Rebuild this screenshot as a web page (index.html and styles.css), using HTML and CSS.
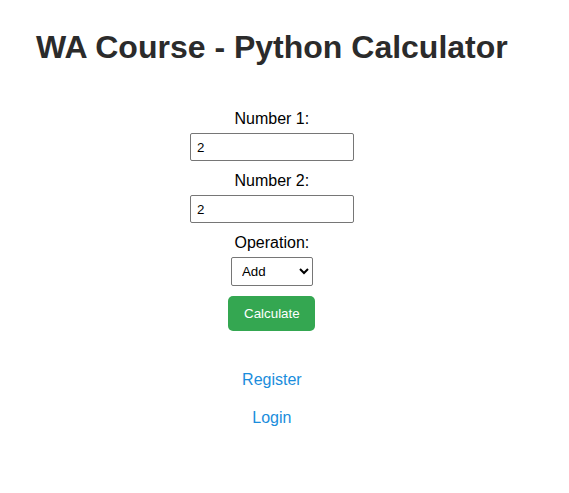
FILE: index.html
```html
<!DOCTYPE html>
<html lang="en">
<head>
<meta charset="utf-8">
<title>WA Course - Python Calculator</title>
<link rel="stylesheet" href="styles.css">
</head>
<body>
<div class="page">
  <h1 class="title">WA Course - Python Calculator</h1>
  <form class="calc">
    <label class="field-label" for="n1">Number 1:</label>
    <input class="num" id="n1" type="text" value="2">
    <label class="field-label" for="n2">Number 2:</label>
    <input class="num" id="n2" type="text" value="2">
    <label class="field-label" for="op">Operation:</label>
    <select class="op" id="op">
      <option>Add</option>
      <option>Subtract</option>
      <option>Multiply</option>
      <option>Divide</option>
    </select>
    <button class="btn" type="button">Calculate</button>
  </form>
  <nav class="links">
    <a class="link" href="#">Register</a>
    <a class="link" href="#">Login</a>
  </nav>
</div>
</body>
</html>
```

FILE: styles.css
```css
html, body {
  background: #ffffff;
}
body {
  margin: 8px;
  font-family: "Liberation Sans", Arial, sans-serif;
  color: #000;
}
.page {
  display: inline-flex;
  flex-direction: column;
  align-items: center;
  margin-left: 28px;
}
.title {
  font-size: 32px;
  font-weight: bold;
  color: #2b2b2b;
  margin: 21.44px 0 0;
  line-height: normal;
}
.calc {
  display: flex;
  flex-direction: column;
  align-items: center;
  margin-top: 42px;
}
.field-label {
  font-size: 16px;
  line-height: 18px;
  margin: 2px 0 5px;
}
.num {
  box-sizing: border-box;
  width: 164px;
  height: 28px;
  padding: 0 6px;
  border: 1px solid #767676;
  border-radius: 2px;
  font-family: "Liberation Sans", Arial, sans-serif;
  font-size: 13.33px;
  color: #000;
  margin: 0 0 9px;
}
.op {
  box-sizing: border-box;
  width: 82px;
  height: 29px;
  padding: 0 4px 0 6px;
  border: 1px solid #767676;
  border-radius: 2px;
  background: #fff;
  font-family: "Liberation Sans", Arial, sans-serif;
  font-size: 13.33px;
  color: #000;
  margin: 0 0 10px;
}
.btn {
  box-sizing: border-box;
  width: 87px;
  height: 35px;
  padding: 0;
  border: none;
  border-radius: 5px;
  background: #34a751;
  color: #fff;
  font-family: "Liberation Sans", Arial, sans-serif;
  font-size: 13.33px;
  cursor: pointer;
}
.links {
  display: flex;
  flex-direction: column;
  align-items: center;
  gap: 20px;
  margin-top: 40px;
}
.link {
  font-size: 16px;
  line-height: 18px;
  color: #1a8ddc;
  text-decoration: none;
}
```
